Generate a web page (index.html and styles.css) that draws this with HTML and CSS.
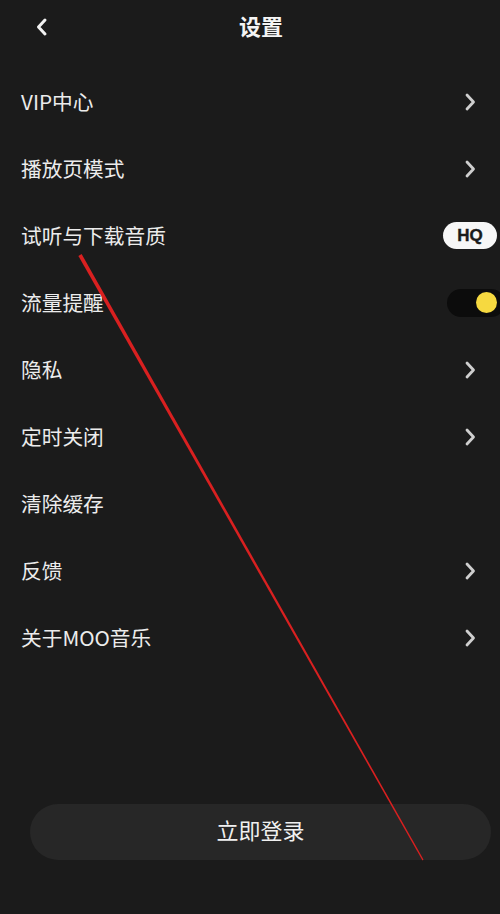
FILE: index.html
```html
<!DOCTYPE html>
<html lang="zh">
<head>
<meta charset="utf-8">
<link rel="stylesheet" href="styles.css">
</head>
<body>
<div class="screen">
  <header class="topbar">
    <span class="back">
      <svg width="14" height="20" viewBox="0 0 14 20"><path d="M10 3 L3.5 10 L10 17" fill="none" stroke="#f2f2f2" stroke-width="3" stroke-linecap="round" stroke-linejoin="round"/></svg>
    </span>
    <h1 class="title">设置</h1>
  </header>
  <ul class="list">
    <li class="row"><span class="label">VIP中心</span><span class="chev"><svg width="14" height="20" viewBox="0 0 14 20"><path d="M4 3 L10.5 10 L4 17" fill="none" stroke="#cfcfcf" stroke-width="2.8" stroke-linecap="round" stroke-linejoin="round"/></svg></span></li>
    <li class="row"><span class="label">播放页模式</span><span class="chev"><svg width="14" height="20" viewBox="0 0 14 20"><path d="M4 3 L10.5 10 L4 17" fill="none" stroke="#cfcfcf" stroke-width="2.8" stroke-linecap="round" stroke-linejoin="round"/></svg></span></li>
    <li class="row"><span class="label">试听与下载音质</span><span class="hq">HQ</span></li>
    <li class="row"><span class="label">流量提醒</span><span class="toggle"><span class="knob"></span></span></li>
    <li class="row"><span class="label">隐私</span><span class="chev"><svg width="14" height="20" viewBox="0 0 14 20"><path d="M4 3 L10.5 10 L4 17" fill="none" stroke="#cfcfcf" stroke-width="2.8" stroke-linecap="round" stroke-linejoin="round"/></svg></span></li>
    <li class="row"><span class="label">定时关闭</span><span class="chev"><svg width="14" height="20" viewBox="0 0 14 20"><path d="M4 3 L10.5 10 L4 17" fill="none" stroke="#cfcfcf" stroke-width="2.8" stroke-linecap="round" stroke-linejoin="round"/></svg></span></li>
    <li class="row"><span class="label">清除缓存</span></li>
    <li class="row"><span class="label">反馈</span><span class="chev"><svg width="14" height="20" viewBox="0 0 14 20"><path d="M4 3 L10.5 10 L4 17" fill="none" stroke="#cfcfcf" stroke-width="2.8" stroke-linecap="round" stroke-linejoin="round"/></svg></span></li>
    <li class="row"><span class="label">关于MOO音乐</span><span class="chev"><svg width="14" height="20" viewBox="0 0 14 20"><path d="M4 3 L10.5 10 L4 17" fill="none" stroke="#cfcfcf" stroke-width="2.8" stroke-linecap="round" stroke-linejoin="round"/></svg></span></li>
  </ul>
  <div class="login-wrap">
    <button class="login">立即登录</button>
  </div>
  <svg class="annot" width="500" height="914" viewBox="0 0 500 914">
    <polygon points="81.6,254.1 78.4,255.9 422.5,860.4 423.5,859.6" fill="#d92020"/>
  </svg>
</div>
</body>
</html>
```

FILE: styles.css
```css
* { box-sizing: border-box; }
html, body {
  margin: 0;
  padding: 0;
  background: #1b1b1b;
}
body {
  width: 500px;
  height: 914px;
  overflow: hidden;
  font-family: "Noto Sans CJK SC", "Noto Sans", sans-serif;
  color: #ececec;
}
.screen {
  position: relative;
  width: 500px;
  height: 914px;
  background: #1b1b1b;
}
.topbar {
  height: 54px;
  display: flex;
  align-items: center;
  justify-content: center;
  position: relative;
}
.back {
  position: absolute;
  left: 35px;
  top: 17px;
  display: flex;
}
.title {
  margin: 0 0 5px 0;
  font-size: 22px;
  font-weight: 700;
  color: #f4f4f4;
  line-height: 1;
  padding-left: 22px;
}
.list {
  list-style: none;
  margin: 14px 0 0 0;
  padding: 0;
}
.row {
  height: 67px;
  display: flex;
  align-items: center;
  justify-content: space-between;
  padding-left: 21px;
}
.label {
  font-size: 20.7px;
  line-height: 1;
  color: #ececec;
  padding-bottom: 1px;
}
.chev {
  display: flex;
  margin-right: 23px;
}
.hq {
  width: 54px;
  height: 27px;
  border-radius: 14px;
  background: #f7f7f7;
  color: #1b1b1b;
  font-family: "Liberation Sans", Arial, sans-serif;
  font-weight: 700;
  font-size: 17px;
  display: flex;
  align-items: center;
  justify-content: center;
  margin-right: 3px;
  -webkit-text-stroke: 0.4px #1b1b1b;
}
.toggle {
  width: 58px;
  height: 28px;
  border-radius: 14px;
  background: #0c0c0c;
  display: flex;
  align-items: center;
  justify-content: flex-end;
  padding-right: 8px;
  margin-right: -5px;
}
.knob {
  width: 21px;
  height: 21px;
  border-radius: 50%;
  background: #f6d940;
}
.login-wrap {
  margin-top: 133px;
  padding: 0 9px 0 30px;
}
.login {
  width: 100%;
  height: 56px;
  border: none;
  border-radius: 28px;
  background: #272727;
  color: #f0f0f0;
  font-family: "Noto Sans CJK SC", "Noto Sans", sans-serif;
  font-size: 22px;
  padding: 0 0 6px 0;
}
.annot {
  position: absolute;
  left: 0;
  top: 0;
  pointer-events: none;
}
```
